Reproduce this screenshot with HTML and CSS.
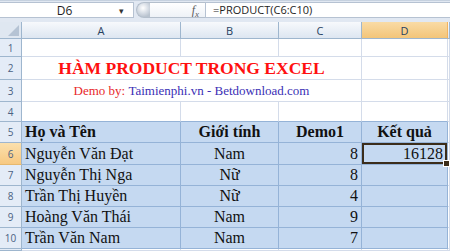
FILE: index.html
```html
<!DOCTYPE html>
<html lang="vi">
<head>
    <meta charset="UTF-8">
    <title>Hàm PRODUCT trong Excel</title>
    <link rel="stylesheet" href="styles.css">
</head>
<body>

    <!-- thanh công thức -->
    <div class="formula-bar">
        <div class="name-box">
            <span class="ref">D6</span>
            <span class="arrow">&#9662;</span>
        </div>
        <div class="grip"></div>
        <div class="fx">f<sub>x</sub></div>
        <div class="formula">=PRODUCT(C6:C10)</div>
    </div>

    <!-- bảng tính -->
    <div class="sheet">
        <div class="corner"></div>
        <div class="col-head">A</div>
        <div class="col-head">B</div>
        <div class="col-head">C</div>
        <div class="col-head active">D</div>
        <div class="col-head"></div>

        <div class="row-head">1</div>
        <div class="cell"></div><div class="cell"></div><div class="cell"></div><div class="cell"></div><div class="cell"></div>

        <div class="row-head">2</div>
        <div class="cell title">HÀM PRODUCT TRONG EXCEL</div>
        <div class="cell"></div><div class="cell"></div>

        <div class="row-head">3</div>
        <div class="cell sub"><span class="red">Demo by:</span>&nbsp;Taimienphi.vn - Betdownload.com</div>
        <div class="cell"></div><div class="cell"></div>

        <div class="row-head">4</div>
        <div class="cell edge"></div><div class="cell edge"></div><div class="cell edge"></div><div class="cell edge"></div><div class="cell"></div>

        <div class="row-head">5</div>
        <div class="cell t th left">Họ và Tên</div>
        <div class="cell t th">Giới tính</div>
        <div class="cell t th">Demo1</div>
        <div class="cell t th">Kết quả</div>
        <div class="cell"></div>

        <div class="row-head active">6</div>
        <div class="cell t left">Nguyễn Văn Đạt</div>
        <div class="cell t">Nam</div>
        <div class="cell t num">8</div>
        <div class="cell t num selected">16128</div>
        <div class="cell"></div>

        <div class="row-head">7</div>
        <div class="cell t left">Nguyễn Thị Nga</div>
        <div class="cell t">Nữ</div>
        <div class="cell t num">8</div>
        <div class="cell t num"></div>
        <div class="cell"></div>

        <div class="row-head">8</div>
        <div class="cell t left">Trần Thị Huyền</div>
        <div class="cell t">Nữ</div>
        <div class="cell t num">4</div>
        <div class="cell t num"></div>
        <div class="cell"></div>

        <div class="row-head">9</div>
        <div class="cell t left">Hoàng Văn Thái</div>
        <div class="cell t">Nam</div>
        <div class="cell t num">9</div>
        <div class="cell t num"></div>
        <div class="cell"></div>

        <div class="row-head">10</div>
        <div class="cell t left">Trần Văn Nam</div>
        <div class="cell t">Nam</div>
        <div class="cell t num">7</div>
        <div class="cell t num"></div>
        <div class="cell"></div>

        <div class="row-head"></div>
        <div class="cell"></div><div class="cell"></div><div class="cell"></div><div class="cell"></div><div class="cell"></div>
    </div>

</body>
</html>
```

FILE: styles.css
```css
*{
    margin: 0;
    padding: 0;
    box-sizing: border-box;
}
body{
    width: 450px;
    height: 251px;
    overflow: hidden;
    background: #ffffff;
    font-family: "Liberation Serif", "Times New Roman", serif;
}

/* thanh công thức */
.formula-bar{
    display: flex;
    height: 22px;
    padding: 1px 0 4px 0;
    background: #e1e8f2;
    border-top: 1px solid #c6d1df;
    font-family: "Open Sans", "Liberation Sans", sans-serif;
    font-size: 11px;
    color: #1e1e1e;
}
.name-box{
    display: flex;
    align-items: center;
    width: 134px;
    background: #ffffff;
    border: 1px solid #b6c2d2;
    border-left: none;
}
.name-box .ref{
    flex: 1;
    text-align: center;
    padding-left: 10px;
    font-size: 12px;
}
.name-box .arrow{
    width: 14px;
    font-size: 9px;
    color: #333333;
}
.grip{
    width: 14px;
    margin-left: 2px;
    border-radius: 8px 0 0 8px;
    background: radial-gradient(circle at 6px 5px, #ffffff 0, #d8dee6 5px, #b9c3cf 9px);
    border: 1px solid #b4bfcc;
    border-right: none;
}
.fx{
    width: 55px;
    padding-right: 6px;
    text-align: right;
    font-family: "Liberation Serif", serif;
    font-style: italic;
    font-size: 12px;
    line-height: 14px;
    color: #5b5b5b;
    background: linear-gradient(#ffffff, #eef2f7);
    border-top: 1px solid #b4bfcc;
    border-bottom: 1px solid #b4bfcc;
}
.fx sub{
    font-size: 9px;
}
.formula{
    flex: 1;
    padding-left: 7px;
    line-height: 14px;
    background: #ffffff;
    border: 1px solid #b6c2d2;
    border-right: none;
}

/* lưới bảng tính */
.sheet{
    display: grid;
    grid-template-columns: 22px 159px 98px 83px 86px 1fr;
    grid-template-rows: 17px 18px 23px 22px 20px 21px 22px 21px 21px 21px 21px 2px;
}
.corner{
    position: relative;
    background: #dfe7f1;
    border-right: 1px solid #9eb6ce;
    border-bottom: 1px solid #9eb6ce;
}
.corner::after{
    content: "";
    position: absolute;
    right: 2px;
    bottom: 2px;
    border-left: 11px solid transparent;
    border-bottom: 11px solid #b5c3d4;
}
.col-head,
.row-head{
    display: flex;
    align-items: center;
    justify-content: center;
    font-family: "Open Sans", "Liberation Sans", sans-serif;
    font-size: 11px;
    border-right: 1px solid #9eb6ce;
    border-bottom: 1px solid #9eb6ce;
}
.col-head{
    color: #27415f;
    background: linear-gradient(#f7f9fc, #dde6f1);
}
.row-head{
    color: #4b6282;
    background: #e4ecf7;
    font-size: 10px;
}
.col-head.active{
    background: linear-gradient(#f9dba5, #f3c579);
    border-right-color: #f2b35f;
}
.row-head.active{
    background: linear-gradient(#fbe0ad, #f7c982);
    border-bottom-color: #e6b86e;
}

.cell{
    display: flex;
    align-items: center;
    justify-content: center;
    border-right: 1px solid #d4dcea;
    border-bottom: 1px solid #d4dcea;
    font-size: 16px;
    color: #111111;
    white-space: nowrap;
}
.edge{
    border-bottom-color: #95b3d7;
}
.title{
    grid-column: span 3;
    color: #ff1010;
    font-weight: bold;
    font-size: 17.5px;
}
.sub{
    grid-column: span 3;
    font-size: 13px;
    color: #3a2fb5;
}
.sub .red{
    color: #e8282a;
}

/* vùng dữ liệu */
.t{
    background: #c5d9f1;
    border-right-color: #95b3d7;
    border-bottom-color: #95b3d7;
}
.th{
    font-weight: bold;
}
.left{
    justify-content: flex-start;
    padding-left: 3px;
}
.num{
    justify-content: flex-end;
    padding-right: 3px;
}
.selected{
    position: relative;
    box-shadow: inset 0 0 0 2px #3b2d1b;
    padding-right: 4px;
}
.selected::after{
    content: "";
    position: absolute;
    right: -3px;
    bottom: -3px;
    width: 5px;
    height: 5px;
    background: #3b2d1b;
    border: 1px solid #ffffff;
}
```
